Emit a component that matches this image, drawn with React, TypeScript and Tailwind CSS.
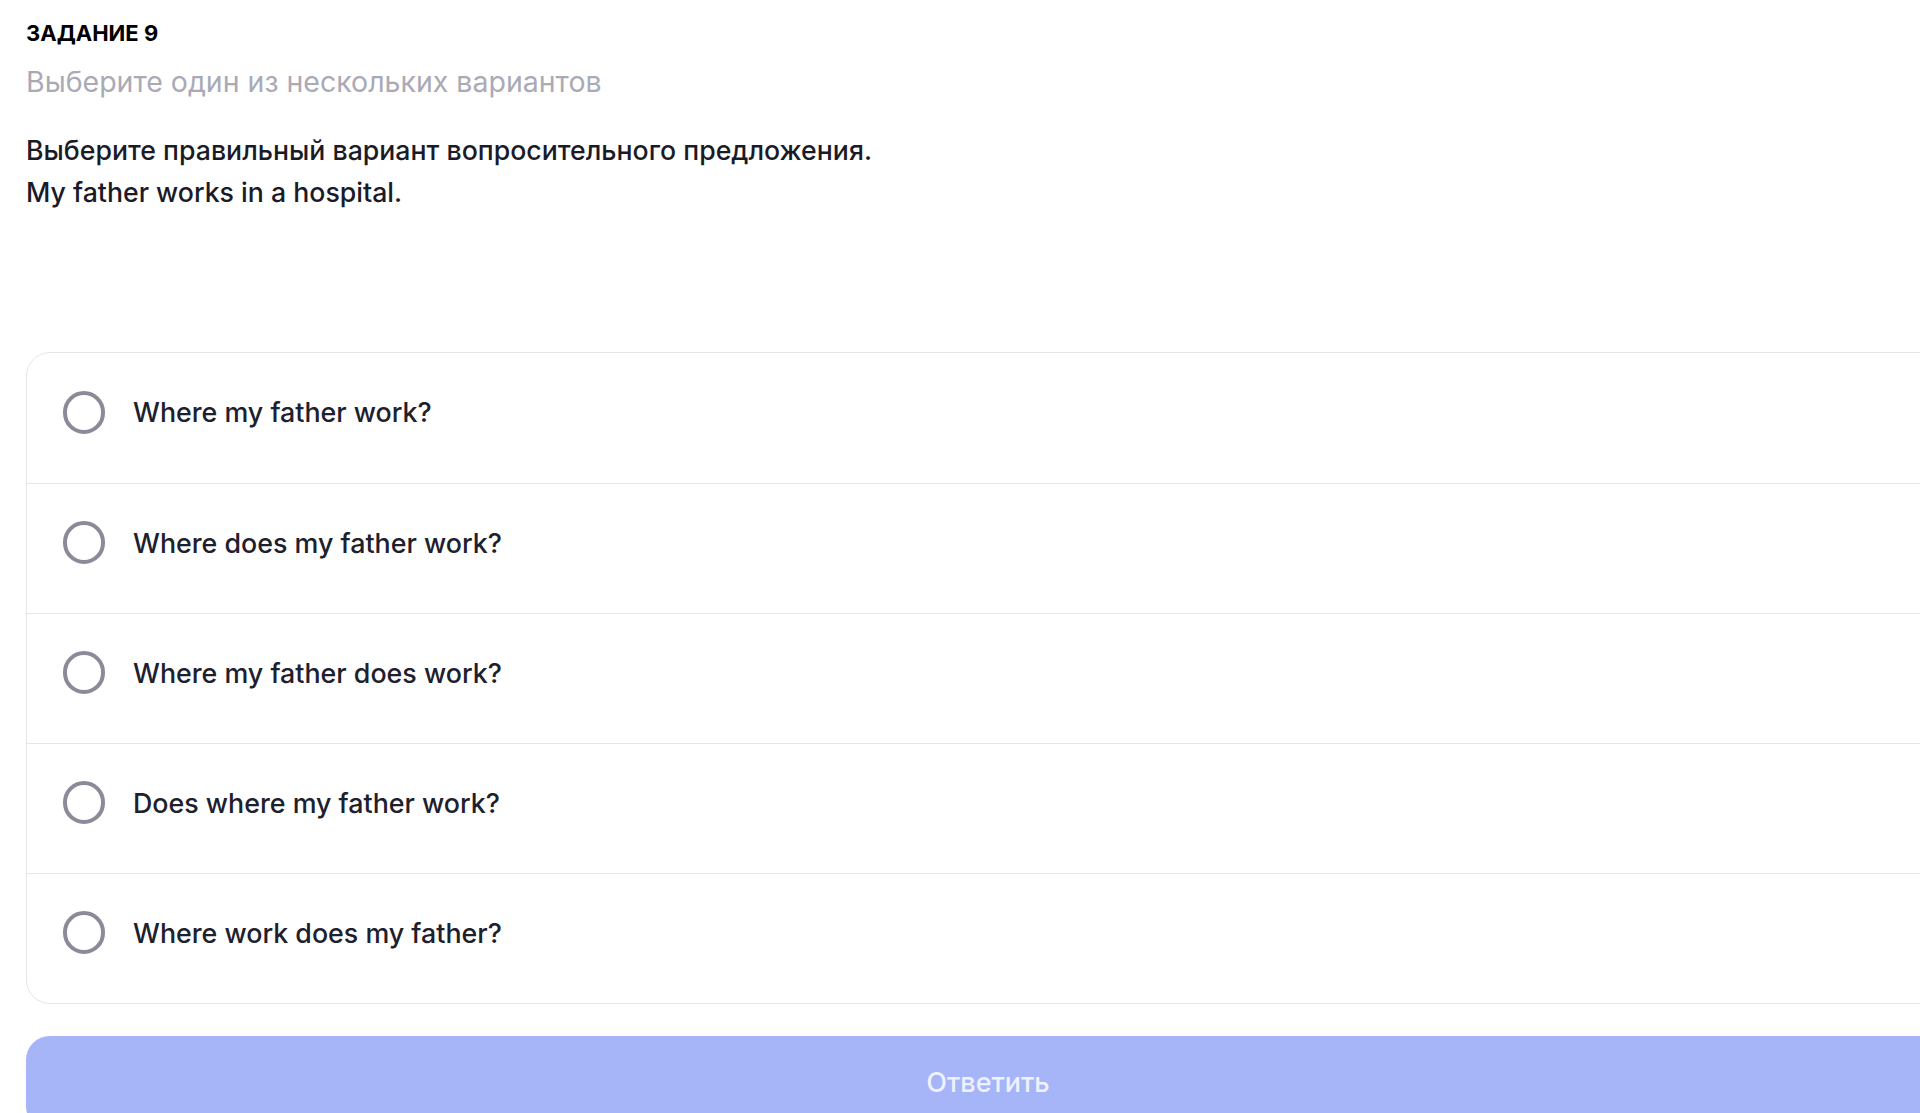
import { useState } from 'react'

const OPTIONS = [
  'Where my father work?',
  'Where does my father work?',
  'Where my father does work?',
  'Does where my father work?',
  'Where work does my father?',
]

export default function App() {
  const [picked, setPicked] = useState<number | null>(null)

  return (
    <main className="w-screen h-screen overflow-hidden bg-white font-['Inter','Noto_Sans',sans-serif]">
      <div className="w-[1950px] pl-[26px] pt-[19px]">
        <div className="text-[22px] leading-[28px] font-bold text-black">ЗАДАНИЕ 9</div>
        <div className="mt-[19px] text-[28.5px] leading-[32px] text-[#aaaab6]">Выберите один из нескольких вариантов</div>

        <div className="mt-[31px] text-[26.7px] leading-[42px] font-medium text-[#1b1b27]">
          <p>Выберите правильный вариант вопросительного предложения.</p>
          <p>My father works in a hospital.</p>
        </div>

        <div className="mt-[139px] rounded-[24px] border border-[#e6e6e9] bg-white">
          {OPTIONS.map((o, i) => (
            <label
              key={o}
              onClick={() => setPicked(i)}
              className={`flex h-[130px] items-center gap-[28px] pl-[36px] pb-[12px] cursor-pointer ${i > 0 ? 'border-t border-[#e6e6e9]' : ''}`}
            >
              <span className="flex h-[43px] w-[42px] shrink-0 items-center justify-center rounded-full border-[4px] border-[#8b8a99]">
                {picked === i && <span className="h-[18px] w-[18px] rounded-full bg-[#8b8a99]" />}
              </span>
              <span className="text-[26.8px] leading-[34px] font-medium text-[#20202d]">{o}</span>
            </label>
          ))}
        </div>

        <button className="mt-[32px] flex h-[94px] w-full items-center justify-center rounded-[24px] bg-[#a6b5f8] text-[27px] font-medium text-[#eef1fe]">
          Ответить
        </button>
      </div>
    </main>
  )
}
